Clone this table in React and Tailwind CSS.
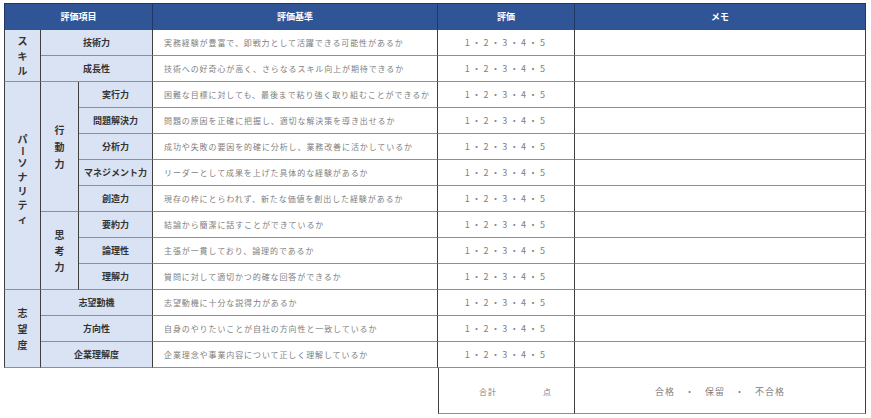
const font = { fontFamily: '"Noto Sans CJK JP", "Noto Sans", sans-serif' }

// 評価シートの各行
const ROWS = [
  { label: '技術力', text: '実務経験が豊富で、即戦力として活躍できる可能性があるか' },
  { label: '成長性', text: '技術への好奇心が高く、さらなるスキル向上が期待できるか' },
  { label: '実行力', text: '困難な目標に対しても、最後まで粘り強く取り組むことができるか' },
  { label: '問題解決力', text: '問題の原因を正確に把握し、適切な解決策を導き出せるか' },
  { label: '分析力', text: '成功や失敗の要因を的確に分析し、業務改善に活かしているか' },
  { label: 'マネジメント力', text: 'リーダーとして成果を上げた具体的な経験があるか' },
  { label: '創造力', text: '現存の枠にとらわれず、新たな価値を創出した経験があるか' },
  { label: '要約力', text: '結論から簡潔に話すことができているか' },
  { label: '論理性', text: '主張が一貫しており、論理的であるか' },
  { label: '理解力', text: '質問に対して適切かつ的確な回答ができるか' },
  { label: '志望動機', text: '志望動機に十分な説得力があるか' },
  { label: '方向性', text: '自身のやりたいことが自社の方向性と一致しているか' },
  { label: '企業理解度', text: '企業理念や事業内容について正しく理解しているか' }
]

const cell = 'border-r border-b border-r-[#3f3f3f] border-b-[#8f8f8f]'
const blue = 'bg-[#dae3f3]'

function Vertical({ text, gap }) {
  return (
    <div className="flex flex-col items-center text-[10px] font-bold text-[#333]">
      {text.split('').map((c, i) => (
        <span key={i} className={c === 'ー' ? `${gap} [writing-mode:vertical-rl]` : gap}>{c}</span>
      ))}
    </div>
  )
}

function Label({ children, className = '' }) {
  return (
    <div className={`${cell} ${blue} flex items-center justify-center text-[9px] font-bold text-[#333] whitespace-nowrap ${className}`}>
      {children}
    </div>
  )
}

function Rest({ text }) {
  return (
    <>
      <div className={`${cell} flex items-center pl-[11px] text-[8px] tracking-[0.9px] text-[#808080] whitespace-nowrap`}>
        {text}
      </div>
      <div className={`${cell} flex items-center justify-center text-[9px] tracking-[2.4px] text-[#808080]`}>
        1・2・3・4・5
      </div>
      <div className={cell}></div>
    </>
  )
}

export default function App() {
  return (
    <div className="w-[871px] h-[418px] bg-white pt-[3px] pl-[4px]" style={font}>
      <div className="grid grid-cols-[37px_38px_74px_285px_137px_291px] grid-rows-[27px_repeat(13,26px)_46px]">
        {/* Header */}
        <div className="col-span-3 bg-[#2f5597] border-l border-t border-r border-[#1f3864] flex items-center justify-center text-[9px] font-bold text-white">評価項目</div>
        <div className="bg-[#2f5597] border-t border-r border-[#1f3864] flex items-center justify-center text-[9px] font-bold text-white">評価基準</div>
        <div className="bg-[#2f5597] border-t border-r border-[#1f3864] flex items-center justify-center text-[9px] font-bold text-white">評価</div>
        <div className="bg-[#2f5597] border-t border-r border-[#1f3864] flex items-center justify-center text-[9px] font-bold text-white">メモ</div>

        {/* スキル */}
        <div className={`${cell} ${blue} border-l border-l-[#3f3f3f] row-span-2 col-start-1 flex items-center justify-center`}>
          <Vertical text="スキル" gap="leading-[15px]" />
        </div>
        <Label className="col-span-2">{ROWS[0].label}</Label>
        <Rest text={ROWS[0].text} />
        <Label className="col-span-2 col-start-2">{ROWS[1].label}</Label>
        <Rest text={ROWS[1].text} />

        {/* パーソナリティ */}
        <div className={`${cell} ${blue} border-l border-l-[#3f3f3f] row-span-8 col-start-1 flex items-center justify-center pb-[14px]`}>
          <Vertical text="パーソナリティ" gap="leading-[14px]" />
        </div>
        <div className={`${cell} ${blue} row-span-5 col-start-2 flex items-center justify-center`}>
          <Vertical text="行動力" gap="leading-[17px]" />
        </div>
        {ROWS.slice(2, 7).map(r => (
          <div key={r.label} className="contents">
            <Label className="col-start-3">{r.label}</Label>
            <Rest text={r.text} />
          </div>
        ))}
        <div className={`${cell} ${blue} row-span-3 col-start-2 flex items-center justify-center`}>
          <Vertical text="思考力" gap="leading-[16px]" />
        </div>
        {ROWS.slice(7, 10).map(r => (
          <div key={r.label} className="contents">
            <Label className="col-start-3">{r.label}</Label>
            <Rest text={r.text} />
          </div>
        ))}

        {/* 志望度 */}
        <div className={`${cell} ${blue} border-l border-l-[#3f3f3f] row-span-3 col-start-1 flex items-center justify-center`}>
          <Vertical text="志望度" gap="leading-[16px]" />
        </div>
        {ROWS.slice(10).map(r => (
          <div key={r.label} className="contents">
            <Label className="col-span-2 col-start-2">{r.label}</Label>
            <Rest text={r.text} />
          </div>
        ))}

        {/* 合計 */}
        <div className={`${cell} border-l border-l-[#3f3f3f] col-start-5 flex items-center justify-center gap-[46px] pl-[18px] text-[8px] tracking-[1px] text-[#808080] pt-[2px]`}>
          <span>合計</span>
          <span>点</span>
        </div>
        <div className={`${cell} flex items-center justify-center text-[9px] tracking-[1px] text-[#808080] pt-[2px]`}>
          合格　・　保留　・　不合格
        </div>
      </div>
    </div>
  )
}
